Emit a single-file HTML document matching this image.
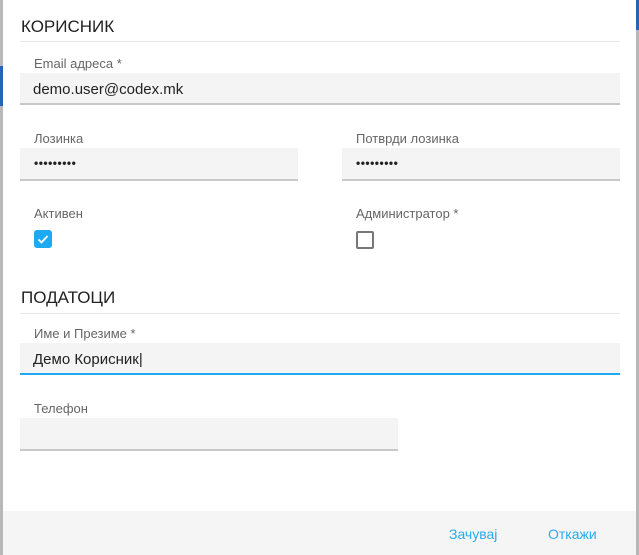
<!DOCTYPE html>
<html><head><meta charset="utf-8"><style>
body{margin:0;width:639px;height:555px;position:relative;background:#fff;font-family:"Liberation Sans",sans-serif;overflow:hidden}
.a{position:absolute}
.h{font-size:17px;color:#222;left:21px}
.ln{height:1px;background:#e6e6e6;left:20px;width:600px}
.lb{font-size:13px;color:#666}
.in{background:#f4f4f4;border-bottom:2px solid #c8c8c8;box-sizing:border-box;font-size:15px;color:#222;padding-left:13px}
.dots{font-size:12px;letter-spacing:0.5px;font-weight:bold;padding-left:14px}
</style></head><body>
<div class="a" style="left:0;top:0;width:3px;height:555px;background:#b8b8b8"></div>
<div class="a" style="left:0;top:66px;width:3px;height:40px;background:#2a63b0"></div>
<div class="a" style="left:636px;top:0;width:3px;height:555px;background:#b8b8b8"></div>
<div class="a" style="left:636px;top:0;width:3px;height:30px;background:#2a63b0"></div>
<div class="a h" style="top:17px">КОРИСНИК</div>
<div class="a ln" style="top:41px"></div>
<div class="a lb" style="left:34px;top:56px">Email адреса *</div>
<div class="a in" style="left:20px;top:73px;width:600px;height:32px;line-height:34px">demo.user@codex.mk</div>
<div class="a lb" style="left:34px;top:131px">Лозинка</div>
<div class="a in dots" style="left:20px;top:148px;width:278px;height:33px;line-height:31px">•••••••••</div>
<div class="a lb" style="left:356px;top:131px">Потврди лозинка</div>
<div class="a in dots" style="left:342px;top:148px;width:278px;height:33px;line-height:31px">•••••••••</div>
<div class="a lb" style="left:34px;top:206px">Активен</div>
<div class="a" style="left:34px;top:230px;width:18px;height:18px;background:#1eaaf1;border-radius:3px">
<svg width="18" height="18"><path d="M4.5 9.5l3 3 6-6.5" stroke="#fff" stroke-width="1.8" fill="none"/></svg></div>
<div class="a lb" style="left:356px;top:206px">Администратор *</div>
<div class="a" style="left:356px;top:231px;width:14px;height:14px;border:2px solid #777;border-radius:2px"></div>
<div class="a h" style="top:288px">ПОДАТОЦИ</div>
<div class="a ln" style="top:313px"></div>
<div class="a lb" style="left:34px;top:326px">Име и Презиме *</div>
<div class="a in" style="left:20px;top:343px;width:600px;height:32px;line-height:34px;border-bottom-color:#1eaaf1">Демо Корисник|</div>
<div class="a lb" style="left:34px;top:401px">Телефон</div>
<div class="a in" style="left:20px;top:418px;width:378px;height:33px"></div>
<div class="a" style="left:3px;top:511px;width:633px;height:44px;background:#f5f5f5"></div>
<div class="a" style="left:449px;top:526px;font-size:14px;color:#29abee">Зачувај</div>
<div class="a" style="left:548px;top:526px;font-size:14px;color:#29abee">Откажи</div>
</body></html>
